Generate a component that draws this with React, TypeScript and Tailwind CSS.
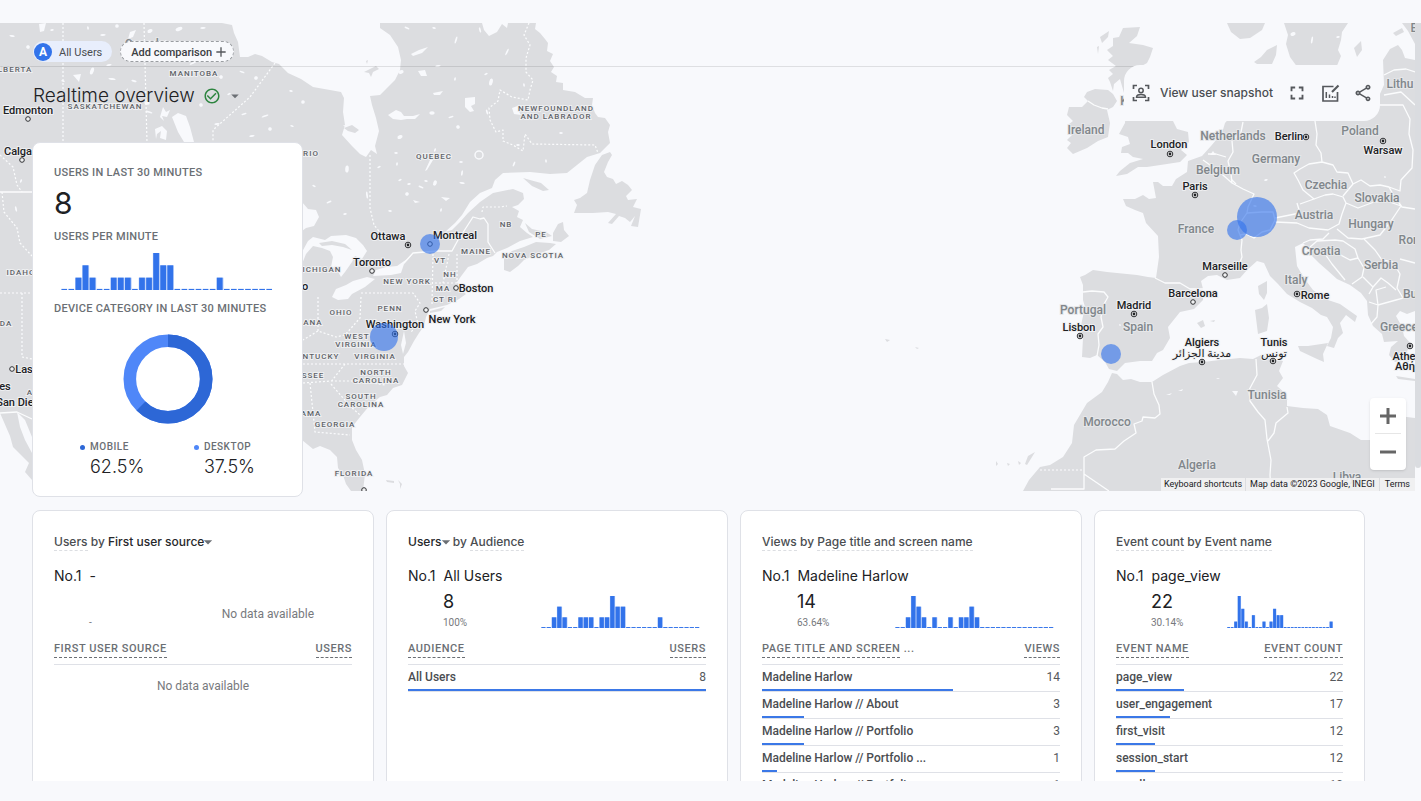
import React from "react";
import { MdAdd, MdArrowDropDown, MdCheckCircleOutline, MdFullscreen, MdOutlineShare } from "react-icons/md";

const LAND = [
  // North America
  "M0,23 L222,23 L232,25 L234,33 L238,42 L240,57 L248,57 L255,54 L262,56 L272,62 L279,64 L288,73 L301,79 L313,87 L330,90 L341,92 L344,98 L343,112 L345,125 L342,135 L352,146 L360,154 L366,157 L371,150 L377,154 L375,146 L379,131 L376,118 L372,105 L370,96 L380,95 L387,88 L395,80 L400,70 L401,60 L398,47 L390,35 L380,28 L380,23 L482,23 L484,30 L489,36 L497,32 L502,24 L507,28 L508,23 L536,23 L535,29 L540,33 L545,39 L548,43 L547,51 L553,54 L550,61 L554,67 L551,72 L557,76 L556,82 L563,83 L563,90 L575,92 L585,98 L593,98 L592,105 L595,113 L598,117 L605,118 L610,125 L608,132 L610,143 L600,153 L587,157 L577,165 L567,173 L550,174 L530,172 L503,173 L495,180 L492,188 L480,193 L470,202 L462,215 L455,223 L445,232 L452,230 L460,222 L468,213 L480,202 L493,193 L513,189 L523,193 L524,199 L518,205 L512,207 L519,211 L517,217 L523,220 L520,227 L527,233 L533,237 L520,241 L507,248 L497,252 L493,256 L487,258 L482,261 L477,264 L468,267 L462,275 L457,282 L461,290 L466,294 L459,299 L447,305 L430,309 L426,317 L424,326 L419,333 L414,341 L408,352 L404,357 L404,366 L408,373 L402,385 L393,388 L387,395 L380,397 L370,405 L360,417 L352,427 L352,440 L356,450 L362,460 L365,474 L363,491 L351,491 L346,484 L343,475 L338,468 L337,457 L330,450 L320,446 L313,449 L302,440 L230,438 L150,470 L60,470 L32,437 L25,420 L17,412 L20,427 L25,440 L32,453 L32,480 L25,472 L29,463 L21,455 L13,447 L10,436 L0,413 Z",
  // Newfoundland, Anticosti, Prince Edward Island, Nova Scotia, Long Island
  "M610,152 L612,155 L608,162 L604,172 L607,177 L613,179 L616,184 L622,181 L628,185 L632,190 L626,196 L628,200 L637,199 L633,207 L641,209 L638,227 L631,226 L635,216 L630,222 L625,218 L619,216 L612,224 L608,223 L616,214 L608,212 L593,213 L574,213 L577,205 L574,200 L580,198 L587,193 L590,180 L595,165 L602,155 Z",
  "M523,178 L530,180 L541,183 L549,190 L543,191 L532,186 Z",
  "M525,223 L532,229 L546,232 L552,236 L540,239 L529,232 Z",
  "M504,270 L504,258 L512,251 L524,247 L536,242 L550,243 L556,244 L549,250 L535,255 L524,260 L518,266 L510,272 Z",
  "M553,233 L558,224 L563,222 L564,230 L569,236 L561,242 L553,241 Z",
  "M430,311 L445,307 L441,311 L430,313 Z",
  "M386,480 L394,481 L394,483 L387,482 Z M398,480 L402,484 L400,489 L400,484 Z",
  // British Isles
  "M1123,28 L1140,27 L1137,36 L1129,43 L1143,45 L1153,48 L1150,57 L1147,63 L1138,68 L1136,80 L1152,95 L1160,110 L1173,121 L1177,129 L1188,132 L1189,142 L1181,150 L1187,155 L1180,162 L1167,164 L1147,167 L1138,167 L1127,174 L1116,176 L1120,171 L1130,163 L1143,159 L1133,157 L1128,153 L1121,153 L1122,147 L1130,144 L1128,137 L1119,134 L1125,123 L1126,100 L1120,79 L1114,84 L1113,91 L1110,82 L1108,78 L1113,74 L1109,70 L1116,66 L1108,60 L1113,56 L1107,50 L1113,46 L1113,38 L1119,37 Z",
  "M1100,37 L1109,31 L1108,37 L1102,43 Z M1097,47 L1099,46 L1098,54 Z",
  "M1087,92 L1095,89 L1108,90 L1113,94 L1117,101 L1113,107 L1107,110 L1110,123 L1108,137 L1098,141 L1087,148 L1073,154 L1067,148 L1071,143 L1067,140 L1075,132 L1068,125 L1073,121 L1067,115 L1069,107 L1082,107 L1088,101 L1084,97 Z",
  // Scandinavia and the Baltic
  "M1227,23 L1265,23 L1262,30 L1250,38 L1240,39 L1231,32 Z",
  "M1254,62 L1261,57 L1267,50 L1277,45 L1276,55 L1272,64 L1257,64 Z",
  "M1284,23 L1348,23 L1342,32 L1341,40 L1338,50 L1341,56 L1336,68 L1298,68 L1290,57 L1286,44 L1288,35 Z",
  "M1354,48 L1361,41 L1362,50 L1357,57 Z",
  "M1393,33 L1402,28 L1404,32 L1396,36 Z M1402,23 L1415,23 L1415,44 L1408,31 Z",
  // Continental Europe
  "M1415,60 L1405,58 L1402,50 L1398,45 L1390,49 L1383,60 L1384,85 L1375,105 L1300,110 L1232,115 L1225,123 L1222,133 L1211,146 L1202,156 L1188,161 L1187,172 L1176,179 L1172,186 L1163,186 L1158,182 L1153,182 L1156,198 L1149,199 L1143,195 L1135,199 L1123,199 L1126,206 L1135,210 L1143,213 L1146,223 L1158,236 L1159,257 L1156,278 L1148,277 L1137,275 L1117,273 L1107,272 L1093,270 L1085,275 L1080,277 L1083,285 L1083,300 L1085,307 L1080,330 L1083,338 L1082,357 L1090,358 L1097,355 L1105,362 L1109,369 L1117,371 L1125,363 L1140,361 L1152,361 L1157,353 L1163,350 L1170,338 L1168,327 L1180,312 L1194,309 L1203,300 L1203,289 L1201,281 L1208,276 L1217,275 L1227,280 L1240,278 L1247,270 L1257,261 L1264,263 L1270,276 L1278,284 L1287,294 L1300,302 L1312,308 L1321,315 L1327,317 L1333,327 L1331,338 L1327,346 L1334,348 L1338,338 L1343,333 L1340,323 L1346,315 L1355,322 L1357,316 L1340,304 L1328,300 L1313,290 L1304,278 L1297,266 L1295,247 L1303,243 L1308,248 L1311,255 L1319,263 L1327,270 L1337,279 L1350,285 L1361,293 L1367,301 L1368,315 L1373,326 L1382,334 L1384,342 L1398,341 L1391,347 L1389,355 L1395,362 L1402,360 L1409,362 L1407,351 L1412,345 L1404,336 L1402,327 L1396,316 L1400,311 L1407,314 L1415,311 Z",
  "M1255,310 L1262,308 L1267,304 L1269,318 L1267,331 L1258,334 Z",
  "M1258,286 L1267,281 L1267,293 L1264,300 L1259,294 Z",
  "M1298,346 L1308,346 L1328,343 L1323,354 L1324,362 L1317,359 L1300,351 Z",
  "M1197,323 L1203,320 L1205,326 L1201,328 Z M1210,321 L1215,320 L1214,322 Z",
  "M1396,376 L1415,379 L1415,381 L1398,379 Z",
  // North Africa
  "M1112,373 L1117,374 L1123,380 L1131,379 L1140,382 L1152,382 L1163,375 L1180,366 L1189,363 L1203,362 L1220,360 L1240,358 L1253,359 L1261,355 L1268,358 L1277,360 L1283,361 L1279,371 L1283,378 L1277,386 L1287,395 L1287,406 L1303,408 L1318,409 L1327,415 L1330,426 L1350,433 L1361,440 L1370,440 L1372,425 L1385,415 L1407,417 L1415,418 L1415,491 L1023,491 L1029,480 L1040,467 L1050,465 L1063,457 L1072,443 L1074,425 L1087,403 L1102,392 L1108,382 Z",
  "M1025,464 L1028,456 L1035,452 L1032,457 L1027,465 Z M1018,461 L1021,463 L1019,465 Z M996,461 L998,464 L996,466 Z M1007,463 L1010,464 L1008,466 Z",
  "M885,339 L890,340 L887,342 Z M896,336 L900,338 Z M915,347 L919,348 L917,349 Z",
];

const WATER = [
  "M172,117 L178,113 L186,116 L190,127 L194,142 L184,142 L178,132 Z",
  "M155,129 L162,126 L167,131 L166,140 L160,138 L161,131 L157,134 L156,139 Z M163,107 L166,112 L170,110 L167,117 L162,116 L164,121 L160,117 Z",
  "M302,202 L308,209 L316,210 L319,217 L314,226 L306,228 L302,231 Z",
  "M302,252 L308,241 L313,237 L325,240 L331,236 L346,235 L356,238 L363,245 L367,251 L362,259 L355,256 L352,262 L345,272 L341,277 L336,268 L331,267 L333,257 L330,251 L322,248 L313,246 L306,254 L302,264 Z",
  "M332,297 L336,289 L346,285 L353,281 L367,277 L375,279 L365,287 L352,294 L348,299 L338,300 Z",
  "M373,276 L376,270 L386,267 L397,266 L407,259 L413,254 L404,264 L401,273 L391,275 Z",
  "M388,115 L396,110 L401,112 L404,116 L413,116 L420,114 L415,119 L407,119 L401,120 L393,119 Z",
  "M465,98 L475,97 L475,104 L471,106 L474,111 L470,112 L465,107 Z M512,108 L520,105 L526,108 L518,110 L521,115 L514,114 Z",
  "M411,54 L419,50 L428,47 L422,53 L413,56 Z M418,71 L425,70 L427,76 L421,76 Z M433,93 L443,91 L440,95 L434,95 Z",
  "M39,24 L46,23 L44,31 L40,32 Z M130,32 L136,30 L133,37 L128,39 Z M124,92 L128,88 L127,94 Z M73,75 L81,74 L79,82 Z",
  "M425,171 L430,160 L433,160 L427,170 Z M441,197 L450,198 L446,201 Z M413,200 L420,202 L415,203 Z",
  "M404,331 L406,343 L403,354 L401,345 Z M343,125 L356,127 L359,132 L352,133 Z",
  "M1213,151 L1216,155 L1210,155 Z M1232,391 L1238,391 L1236,396 Z M1166,395 L1172,393 L1170,395 Z M1178,391 L1183,389 L1182,391 Z M1216,378 L1220,378 L1218,379 Z",
];

const ISLANDS = "M364,72 L370,69 L376,66 L379,69 L373,72 L371,77 L369,73 Z M366,61 L368,60 L367,64 Z M344,128 L352,125 L359,130 L355,133 L348,131 Z M319,243 L332,241 L345,244 L352,250 L343,247 L332,245 L322,246 Z";

const PONDS: [number, number, number, number][] = [
  [12, 36, 3, 1], [28, 47, 2, 2], [52, 30, 2, 1], [71, 43, 3, 1], [88, 28, 1, 2], [103, 35, 3, 1], [117, 26, 2, 2], [150, 31, 3, 2], [166, 43, 2, 3], [179, 29, 4, 2], [203, 28, 3, 1], [193, 63, 4, 1], [214, 53, 3, 2], [221, 77, 2, 2], [242, 72, 3, 1], [256, 78, 2, 2],
  [92, 71, 2, 4], [109, 65, 3, 1], [112, 79, 4, 1], [134, 81, 3, 1], [63, 81, 2, 1], [147, 103, 3, 2], [149, 112, 4, 1], [201, 105, 2, 2], [229, 94, 2, 1], [244, 114, 3, 1], [265, 116, 4, 1], [217, 124, 3, 1], [270, 129, 2, 2], [252, 136, 3, 1], [291, 91, 2, 1], [303, 102, 2, 2], [292, 126, 2, 1],
  [407, 28, 3, 1], [434, 28, 2, 1], [456, 40, 1, 4], [480, 30, 1, 3], [507, 52, 1, 4], [486, 74, 2, 1], [401, 72, 3, 2], [438, 66, 3, 1], [455, 79, 1, 2], [491, 82, 2, 4], [524, 85, 1, 2], [432, 113, 3, 2], [451, 117, 3, 1], [400, 137, 3, 2], [458, 127, 2, 2], [487, 112, 1, 3],
  [396, 153, 2, 1], [397, 164, 1, 2], [435, 150, 1, 2], [461, 162, 2, 1], [514, 164, 1, 3], [546, 161, 1, 2], [561, 133, 2, 1], [518, 145, 2, 1], [400, 180, 2, 1], [409, 184, 2, 1], [421, 187, 3, 1], [407, 194, 2, 2], [435, 183, 2, 3], [462, 173, 1, 3], [462, 183, 3, 1], [426, 181, 2, 1], [441, 210, 1, 2], [347, 169, 2, 4], [329, 202, 3, 1], [367, 195, 1, 4], [379, 167, 2, 1], [345, 214, 2, 1], [390, 211, 2, 1], [314, 186, 2, 1], [16, 209, 1, 3], [21, 181, 1, 2],
  [1266, 180, 2, 1], [1120, 325, 1, 1], [1141, 225, 1, 1], [1255, 206, 2, 1], [1338, 37, 2, 1], [1312, 40, 1, 4], [1293, 34, 3, 2], [1385, 177, 1, 1],
];

const DOTTED = "M63,23 V143 M144,23 L147,143 M275,63 L250,97 L213,130 V143 M0,155 L13,167 L17,185 L22,192 M2,192 L4,212 L17,228 L20,243 L32,256 M0,293 H32 M22,293 V357 L32,359 M370,155 V208 L374,225 L383,236 M529,23 L524,35 L530,45 L526,58 L526,72 L533,80 L530,90 L528,100 L512,97 L500,90 L498,101 L489,108 L490,120 L496,132 L503,130 L503,141 L513,145 L523,151 L525,134 L532,144 L595,145 L598,153 M433,254 L432,305 M457,254 V283 M449,254 L443,283 M380,293 H413 L420,303 L415,311 L418,324 L411,332 M361,297 L360,318 L345,335 L336,337 L318,331 L303,340 M318,297 V331 M303,364 H405 M303,383 L331,381 L360,381 L385,385 M345,364 L330,383 M310,383 L315,432 L350,435 M331,384 L350,406 L360,415 M361,293 H380 M435,283 H457 M482,212 L483,207 L500,207 L507,206 M1040,470 H1084";
const BORDERS = "M0,192 H32 M404,263 L413,253 L437,251 L452,251 L458,240 L464,231 L473,217 L480,219 L484,218 L488,224 L488,242 L495,253 M0,413 L17,412 L32,419";
const EURO = [
  "M1088,101 L1094,105 L1102,108 L1108,109",
  "M1243,122 L1241,132 L1232,141 L1233,152 L1228,161 L1231,174 L1232,183 L1224,176 L1217,170 L1203,160 M1232,183 L1243,189 L1254,194 L1248,207 L1247,213 L1240,223 L1238,230 L1242,240 L1241,250 L1242,257 L1239,265 L1246,270",
  "M1208,154 L1216,154 L1226,157 M1231,179 L1236,184 M1247,213 L1262,212 L1273,212 L1275,220 L1270,230 L1262,232 L1254,238 L1246,234 L1240,235 M1275,218 L1290,215 L1300,213 L1297,203",
  "M1315,121 L1317,134 L1316,145 L1321,153 L1322,162 L1309,164 L1300,169 L1294,173 L1298,180 L1303,190 L1314,199 L1300,204 M1322,162 L1333,165 L1337,172 L1348,173 L1353,184 L1361,180 L1370,186 L1380,185 L1389,187",
  "M1389,187 L1400,191 L1401,180 L1412,168 L1413,150 L1409,134 L1410,119 L1403,105 L1380,105 M1384,75 L1394,70 L1406,69 L1415,72 M1384,95 L1401,92 L1415,105",
  "M1314,199 L1325,195 L1333,194 L1343,197 L1346,203 L1342,214 L1339,224 L1328,230 L1309,228 L1297,223 L1275,222 M1353,184 L1343,196 M1346,203 L1358,208 L1374,202 L1387,201 L1401,206 L1391,221 L1380,235 L1362,239 L1348,238 L1337,229 M1389,187 L1394,196 L1402,207 L1415,209",
  "M1303,243 L1310,240 L1323,239 L1329,233 M1310,247 L1317,241 L1335,240 L1343,241 L1355,249 L1358,258 L1350,260 L1335,252 L1325,254 L1332,264 L1345,280 M1358,258 L1364,268 L1362,277 L1352,284 M1364,239 L1375,250 L1382,260 L1393,262 L1400,274 L1397,288 L1403,298",
  "M1363,277 L1373,287 L1369,294 M1373,287 L1381,278 L1388,283 L1396,290 M1369,302 L1378,305 L1376,290 L1386,287 M1378,305 L1396,300 L1403,298 L1415,296 M1378,305 L1377,317 L1371,324 M1400,259 L1415,263",
  "M1155,278 L1165,283 L1180,283 L1190,289 L1203,289 M1083,292 L1092,291 L1104,292 L1108,297 L1104,304 L1101,317 L1103,327 L1098,334 L1099,345 L1097,356",
  "M1152,382 L1154,394 L1159,405 L1160,414 L1155,418 L1143,417 L1142,421 L1134,424 L1136,433 L1124,441 L1115,449 L1096,450 L1084,457 V489 L1051,489 M1084,474 L1109,491",
  "M1256,359 L1257,375 L1249,390 L1250,401 L1258,412 L1265,420 L1267,439 L1271,460 L1270,475 L1271,491 M1287,407 L1288,413 L1276,423 L1274,433 L1268,441",
];

type Label = [string, number, number];
const STATES: Label[] = [
  ["LBERTA", 15, 72], ["MANITOBA", 194, 76], ["SASKATCHEWAN", 105, 109], ["RIO", 311, 156], ["QUEBEC", 434, 159], ["NEWFOUNDLAND", 556, 111], ["AND LABRADOR", 556, 119],
  ["NB", 506, 227], ["PE", 541, 237], ["MAINE", 476, 254], ["NOVA SCOTIA", 533, 258], ["VT", 440, 263], ["NH", 450, 277], ["NEW YORK", 407, 284], ["MA", 443, 291], ["CT RI", 445, 302],
  ["ICHIGAN", 322, 272], ["IDAHO", 21, 275], ["OHIO", 341, 315], ["PENN", 390, 311], ["ANA", 313, 325], ["DA", 6, 326], ["WEST", 357, 339], ["VIRGINIA", 356, 347], ["VIRGINIA", 375, 359],
  ["NTUCKY", 321, 359], ["NORTH", 376, 375], ["CAROLINA", 376, 383], ["SSEE", 313, 378], ["SOUTH", 361, 399], ["CAROLINA", 361, 407], ["AMA", 311, 416], ["GEORGIA", 335, 427], ["A", 30, 395], ["FLORIDA", 354, 476],
];
const COUNTRIES: Label[] = [
  ["Canada", 145, 48], ["Ireland", 1086, 134], ["Netherlands", 1233, 140], ["Belgium", 1218, 174], ["Germany", 1276, 163], ["Poland", 1360, 135], ["Czechia", 1326, 189], ["Slovakia", 1377, 202], ["Austria", 1314, 219],
  ["Hungary", 1371, 228], ["France", 1196, 233], ["Croatia", 1321, 255], ["Rom", 1411, 244], ["Serbia", 1381, 269], ["Italy", 1296, 284], ["Bu", 1410, 298], ["Greece", 1399, 331], ["Portugal", 1083, 314], ["Spain", 1138, 331],
  ["Tunisia", 1267, 399], ["Morocco", 1107, 426], ["Algeria", 1197, 469], ["Libya", 1347, 481], ["Lithu", 1400, 88], ["E", 1414, 32], ["K", 1124, 105],
];
const CITIES: Label[] = [
  ["Edmonton", 28, 114], ["Calga", 18, 155], ["Ottawa", 388, 240], ["Montreal", 455, 239], ["Toronto", 372, 266], ["Boston", 476, 292], ["New York", 452, 323], ["Washington", 395, 328], ["Las", 24, 373], ["es", 5, 390], ["San Dieg", 18, 406], ["o", 305, 290],
  ["London", 1169, 148], ["Berlin", 1289, 140], ["Warsaw", 1383, 154], ["Paris", 1195, 190], ["Marseille", 1225, 270], ["Barcelona", 1193, 297], ["Madrid", 1134, 309], ["Rome", 1315, 299], ["Lisbon", 1079, 331], ["Algiers", 1202, 346], ["مدينة الجزائر", 1202, 357], ["Tunis", 1274, 346], ["تونس", 1274, 357], ["Athe", 1404, 360], ["Αθή", 1405, 370],
];
const PINS: [number, number, boolean][] = [
  [28, 119, false], [22, 160, false], [408, 245, true], [430, 244, false], [372, 271, false], [456, 288, false], [426, 310, false], [395, 334, true], [12, 369, false], [364, 490, false],
  [1170, 154, true], [1306, 137, true], [1383, 141, true], [1195, 195, true], [1225, 275, false], [1193, 302, false], [1134, 314, true], [1297, 294, true], [1080, 336, true], [1202, 362, true], [1273, 361, true], [1410, 346, true],
];
const BUBBLES = [[430, 244, 10], [384, 337, 14], [1257, 217, 20], [1237, 230, 10], [1111, 354, 10]];

function Labels({ items, className, prefix }: { items: Label[]; className: string; prefix: string }) {
  return (
    <g className={className} textAnchor="middle">
      {items.map(([t, x, y], i) => (
        <text key={prefix + i} x={x} y={y}>{t}</text>
      ))}
    </g>
  );
}

function WorldMap() {
  return (
    <svg className="block h-full w-full" viewBox="0 23 1415 468" preserveAspectRatio="xMidYMid slice" role="img" aria-label="Map of active users">
      <g fill="#dcdde0">
        {LAND.map((d) => <path key={d} d={d} />)}
      </g>
      <g fill="#f8f9fc">
        {WATER.map((d) => <path key={d} d={d} />)}
        {PONDS.map(([x, y, rx, ry]) => (
          <ellipse key={x + "-" + y} cx={x} cy={y} rx={rx * 0.9} ry={ry * 0.9} transform={`rotate(${(x * 7) % 50 - 25} ${x} ${y})`} />
        ))}
      </g>
      <path d={ISLANDS} fill="#dcdde0" />
      <circle cx="479" cy="155" r="4" fill="none" stroke="#f8f9fc" strokeWidth="1.5" />
      <g fill="none" stroke="#fbfcfd" strokeLinejoin="round">
        <path d={DOTTED} strokeWidth="1.2" strokeDasharray="2 2" />
        <path d={BORDERS} strokeWidth="1.3" />
        {EURO.map((d) => <path key={d} d={d} strokeWidth="1.3" />)}
      </g>
      <Labels prefix="s" items={STATES} className="fill-[#5f6368] stroke-[#eeeff1] stroke-2 font-['Roboto',sans-serif] text-[8px] font-medium tracking-[1px] [paint-order:stroke]" />
      <Labels prefix="n" items={COUNTRIES} className="fill-[#80868b] stroke-[#e6e7e9] stroke-2 font-['Roboto',sans-serif] text-[12px] font-medium [paint-order:stroke]" />
      <Labels prefix="c" items={CITIES} className="fill-[#202124] stroke-[#eeeff1] stroke-2 font-['Roboto','DejaVu_Sans',sans-serif] text-[11px] font-medium [paint-order:stroke]" />
      {PINS.map(([x, y, capital]) => (
        <g key={x + "," + y}>
          <circle cx={x} cy={y} r={capital ? 2.8 : 2.3} fill="#f1f2f3" stroke="#303134" strokeWidth="1" />
          {capital && <circle cx={x} cy={y} r="1.4" fill="#202124" />}
        </g>
      ))}
      {BUBBLES.map(([x, y, r]) => (
        <circle key={x} cx={x} cy={y} r={r} fill="#3273ec" fillOpacity="0.62" />
      ))}
    </svg>
  );
}

function Bars({ values, className, label }: { values: number[]; className: string; label: string }) {
  const max = Math.max(...values);
  return (
    <svg className={className} viewBox="0 0 300 100" preserveAspectRatio="none" role="img" aria-label={label}>
      {values.map((v, i) => {
        const h = v === 0 ? 3 : (v / max) * 100;
        return (
          <g key={i}>
            {v > 0 && <rect x={i * 10} y={100 - h} width="9.8" height={h} fill="#a9c5f8" />}
            <rect x={i * 10 + 0.6} y={100 - h} width="8" height={h} fill="#3273ea" />
          </g>
        );
      })}
    </svg>
  );
}

const USERS_SERIES = [0, 0, 1, 2, 1, 0, 0, 1, 1, 1, 0, 1, 1, 3, 2, 2, 0, 0, 0, 0, 0, 0, 1, 0, 0, 0, 0, 0, 0, 0];
const VIEWS_SERIES = [0, 0, 1, 3, 2, 1, 0, 1, 0, 0, 1, 0, 1, 1, 2, 1, 0, 0, 0, 0, 0, 0, 0, 0, 0, 0, 0, 0, 0, 0];
const EVENTS_SERIES = [0, 0, 1, 5, 3, 1, 0, 2, 0, 0, 1, 0, 1, 3, 2, 2, 0, 0, 0, 0, 0, 0, 0, 0, 0, 0, 0, 0, 0, 1];

function SummaryCard() {
  return (
    <section className="ml-8 mt-[21px] h-[355px] w-[271px] rounded-lg border border-[#dfe1e7] bg-white px-[21px] pt-[22px]">
      <h2 className="text-[11px] font-medium leading-4 tracking-wide text-[#6b6f74]">USERS IN LAST 30 MINUTES</h2>
      <p className="mt-1 font-['Inter',sans-serif] text-[30px] leading-[36px] text-[#202124]">8</p>
      <h2 className="mt-2 text-[11px] font-medium leading-4 tracking-wide text-[#6b6f74]">USERS PER MINUTE</h2>
      <Bars values={USERS_SERIES} className="ml-[7px] mt-2 h-[37px] w-[212px]" label="Users per minute" />
      <h2 className="mt-[11px] whitespace-nowrap text-[11px] font-medium leading-4 tracking-wide text-[#6b6f74]">DEVICE CATEGORY IN LAST 30 MINUTES</h2>
      <svg className="mx-auto mt-[17px] block h-[90px] w-[90px]" viewBox="-45 -45 90 90" role="img" aria-label="Device category">
        <circle r="38.2" fill="none" stroke="#4f87f8" strokeWidth="12.6" />
        <circle r="38.2" fill="none" stroke="#2d67d6" strokeWidth="12.6" pathLength={100} strokeDasharray="62.5 37.5" transform="rotate(-90)" />
      </svg>
      <dl className="mt-[14px] flex justify-between pl-[26px] pr-[26px]">
        {[["MOBILE", "62.5%", "bg-[#2d67d6]"], ["DESKTOP", "37.5%", "bg-[#4f87f8]"]].map(([name, pct, dot]) => (
          <div key={name}>
            <dt className="flex items-center gap-[5px] text-[10px] font-medium leading-[18px] tracking-wider text-[#6b6f74]">
              <span className={`h-[5px] w-[5px] rounded-full ${dot}`} />
              {name}
            </dt>
            <dd className="pl-[10px] font-['Inter',sans-serif] text-[18px] font-light leading-[22px] text-[#202124]">{pct}</dd>
          </div>
        ))}
      </dl>
    </section>
  );
}

type Row = [string, string, number];
interface ReportProps {
  title: React.ReactNode;
  top: string;
  value?: string;
  share: string;
  series?: number[];
  chartClass?: string;
  dimension: string;
  clipped?: boolean;
  metric: string;
  rows: Row[];
}

function ReportCard({ title, top, value, share, series, chartClass = "", dimension, clipped, metric, rows }: ReportProps) {
  return (
    <section className="h-[380px] min-w-0 rounded-lg border border-[#dfe1e7] bg-white px-[21px] pt-5">
      <h3 className="whitespace-nowrap font-['Inter',sans-serif] text-[12px] font-medium leading-[22px] text-[#4a4d51]">{title}</h3>
      <p className="mt-[13px] flex gap-2 whitespace-nowrap font-['Inter',sans-serif] text-[14px] leading-5 text-[#202124]">
        <span>No.1</span>
        <span>{top}</span>
      </p>
      <div className="flex h-[42px] justify-between">
        <div className="pl-[35px]">
          <p className="h-8 font-['Inter',sans-serif] text-[18px] leading-8 text-[#202124]">{value}</p>
          <p className="text-[10px] leading-[10px] text-[#77797d]">{share}</p>
        </div>
        {series ? (
          <Bars values={series} className={`mt-[10px] h-8 ${chartClass}`} label={metric + " per minute"} />
        ) : (
          <p className="mr-[38px] mt-[18px] text-[12px] leading-5 text-[#77797d]">No data available</p>
        )}
      </div>
      <table className="mt-[13px] w-full border-collapse text-[#55585c]">
        <thead>
          <tr className="h-[23px] border-b border-[#dfe1e7] align-top text-[11px] tracking-wider text-[#6b6f74]">
            <th scope="col" className="p-0 text-left font-medium">
              <span className="inline-block whitespace-nowrap border-b border-dashed border-[#6b6f74] leading-4">{dimension}</span>
              {clipped && <span> ...</span>}
            </th>
            <th scope="col" className="p-0 text-right font-medium">
              <span className="inline-block whitespace-nowrap border-b border-dashed border-[#6b6f74] leading-4">{metric}</span>
            </th>
          </tr>
        </thead>
        <tbody>
          {rows.length === 0 && (
            <tr>
              <td colSpan={2} className="p-0 pt-[11px] text-center text-[12px] leading-5 text-[#77797d]">No data available</td>
            </tr>
          )}
          {rows.map(([name, count, pct], i) => (
            <tr key={i} className="relative h-[27px] border-b border-[#dfe1e7]">
              <td className="p-0 pb-px text-[12px] font-medium text-[#4a4d51]">
                {name}
                <span className="absolute -bottom-px left-0 h-[2px] bg-[#3b78e7]" style={{ width: `${pct}%` }} />
              </td>
              <td className="p-0 pb-px text-right text-[12px]">{count}</td>
            </tr>
          ))}
        </tbody>
      </table>
    </section>
  );
}

function Dashed({ children }: { children: React.ReactNode }) {
  return <span className="border-b border-dashed border-[#dcdee2] pb-px">{children}</span>;
}

function Picker({ children }: { children: React.ReactNode }) {
  return (
    <button type="button" className="inline-flex items-center text-[#26282b]">
      {children}
      <MdArrowDropDown className="-mx-[6px] h-5 w-5 text-[#6b6f74]" />
    </button>
  );
}

function UserFocusIcon() {
  return (
    <svg className="h-[18px] w-[18px]" viewBox="0 0 18 18" fill="none" stroke="#55585c" strokeWidth="1.7" aria-hidden="true">
      <path d="M1.5 5V1.5H5M13 1.5h3.5V5M16.5 13v3.5H13M5 16.5H1.5V13" />
      <circle cx="9" cy="6.500" r="2.200" strokeWidth="1.5" />
      <path d="M4.5 13.2c0-2 2.7-2.700 4.500-2.700s4.500.7 4.500 2.700z" strokeWidth="1.5" />
    </svg>
  );
}

function ChartEditIcon() {
  return (
    <svg className="h-[19px] w-[19px]" viewBox="0 0 19 19" fill="none" stroke="#55585c" strokeWidth="1.7" aria-hidden="true">
      <path d="M12.5 2.500H2V17h14.500V8" />
      <path d="M5.300 14V8M8.500 14v-3.500M11.500 14v-2M14 14v-1.500" strokeWidth="1.500" />
      <path d="M11 8 17.500 1.500" strokeWidth="2.200" />
    </svg>
  );
}

export default function App() {
  return (
    <div className="flex h-screen flex-col bg-[#f8f9fc] pb-5 pt-[23px] font-['Roboto',sans-serif]">
      <div className="flex min-h-0 flex-1">
        <main className="relative min-w-0 flex-1 overflow-hidden">
          <div className="absolute inset-x-0 top-0 h-[468px]">
            <WorldMap />
            <div className="absolute right-[9px] top-[375px] flex w-9 flex-col items-center rounded-sm bg-white shadow">
              <button type="button" aria-label="Zoom in" className="flex h-[35px] w-full items-center justify-center">
                <svg className="h-4 w-4" viewBox="0 0 16 16" aria-hidden="true"><path d="M6.500 0h3v6.500H16v3H9.500V16h-3V9.500H0v-3h6.500z" fill="#666" /></svg>
              </button>
              <span className="h-px w-[26px] bg-[#e6e6e6]" />
              <button type="button" aria-label="Zoom out" className="flex h-[36px] w-full items-center justify-center">
                <svg className="h-4 w-4" viewBox="0 0 16 16" aria-hidden="true"><path d="M0 6.500h16v3H0z" fill="#666" /></svg>
              </button>
            </div>
            <div className="absolute bottom-0 right-0 flex gap-px whitespace-nowrap text-[9px] leading-[13px] text-[#202124]">
              <button type="button" className="bg-[#f2f2f3]/90 px-[3px]">Keyboard shortcuts</button>
              <span className="bg-[#f2f2f3]/90 px-1">Map data ©2023 Google, INEGI</span>
              <a href="#terms" className="bg-[#f2f2f3]/90 px-[5px]">Terms</a>
            </div>
          </div>

          <div className="pointer-events-none relative *:pointer-events-auto">
            <header className="mr-[35px] flex h-11 items-start gap-2 border-b border-black/10 pl-[33px] pt-[18px]">
              <button type="button" className="flex h-[21px] items-center gap-[7px] rounded-full bg-[#e8eefc] pl-px pr-[10px] text-[11px] leading-none text-[#4a4d51]">
                <span className="flex h-[18px] w-[18px] items-center justify-center rounded-full bg-[#3273ea] text-[12px] font-bold text-white">A</span>
                <span className="pt-px">All Users</span>
              </button>
              <button type="button" className="flex h-[21px] items-center gap-px rounded-full border border-dashed border-[#9a9da1] bg-[#f8f9fc] pl-[10px] pr-1 text-[11px] font-medium leading-none text-[#3c4043]">
                <span className="pt-px">Add comparison</span>
                <MdAdd className="h-4 w-4 text-[#55585c]" />
              </button>
            </header>
            <div className="-mt-[2px] flex h-14 items-center justify-between pr-[35px]">
              <div className="flex items-center pl-[33px] pt-[5px]">
                <h1 className="font-['Inter',sans-serif] text-[19px] font-light leading-6 text-[#202124]">Realtime overview</h1>
                <MdCheckCircleOutline className="ml-2 h-[18px] w-[18px] text-[#2e8540]" aria-hidden="true" />
                <button type="button" aria-label="Report status" className="ml-[5px]">
                  <MdArrowDropDown className="h-[18px] w-[18px] text-[#6b6f74]" />
                </button>
              </div>
              <div className="flex h-14 items-center gap-[13px] rounded-br-2xl rounded-tl-2xl bg-[#f8f9fc] pl-2 pr-[7px] text-[#55585c]">
                <button type="button" className="flex items-center gap-[10px] font-['Inter',sans-serif] text-[12px] font-medium leading-5 text-[#4a4d51]">
                  <UserFocusIcon />
                  View user snapshot
                </button>
                <button type="button" aria-label="Full screen"><MdFullscreen className="h-[22px] w-[22px]" /></button>
                <button type="button" aria-label="Customize report"><ChartEditIcon /></button>
                <button type="button" aria-label="Share"><MdOutlineShare className="h-5 w-5" /></button>
              </div>
            </div>

            <SummaryCard />

            <div className="ml-8 mr-[50px] mt-[13px] grid grid-cols-[342fr_342fr_342fr_271fr] gap-3">
              <ReportCard
                title={<><Dashed>Users</Dashed> by <Picker>First user source</Picker></>}
                top="-" share="-" dimension="FIRST USER SOURCE" metric="USERS" rows={[]}
              />
              <ReportCard
                title={<><Picker>Users</Picker> by <Dashed>Audience</Dashed></>}
                top="All Users" value="8" share="100%" series={USERS_SERIES} chartClass="w-[159px] mr-[6px]"
                dimension="AUDIENCE" metric="USERS" rows={[["All Users", "8", 100]]}
              />
              <ReportCard
                title={<><Dashed>Views</Dashed> by <Dashed>Page title and screen name</Dashed></>}
                top="Madeline Harlow" value="14" share="63.64%" series={VIEWS_SERIES} chartClass="w-[159px] mr-[6px]"
                dimension="PAGE TITLE AND SCREEN" clipped metric="VIEWS"
                rows={[["Madeline Harlow", "14", 64], ["Madeline Harlow // About", "3", 14], ["Madeline Harlow // Portfolio", "3", 14], ["Madeline Harlow // Portfolio ...", "1", 5], ["Madeline Harlow // Portfolio", "1", 5]]}
              />
              <ReportCard
                title={<><Dashed>Event count</Dashed> by <Dashed>Event name</Dashed></>}
                top="page_view" value="22" share="30.14%" series={EVENTS_SERIES} chartClass="w-[106px] mr-[10px]"
                dimension="EVENT NAME" metric="EVENT COUNT"
                rows={[["page_view", "22", 30], ["user_engagement", "17", 24], ["first_visit", "12", 17], ["session_start", "12", 17], ["scroll", "10", 14]]}
              />
            </div>
          </div>
        </main>
        <div className="h-[445px] w-[6px] rounded-b-full bg-[#dadce0]" />
      </div>
    </div>
  );
}
